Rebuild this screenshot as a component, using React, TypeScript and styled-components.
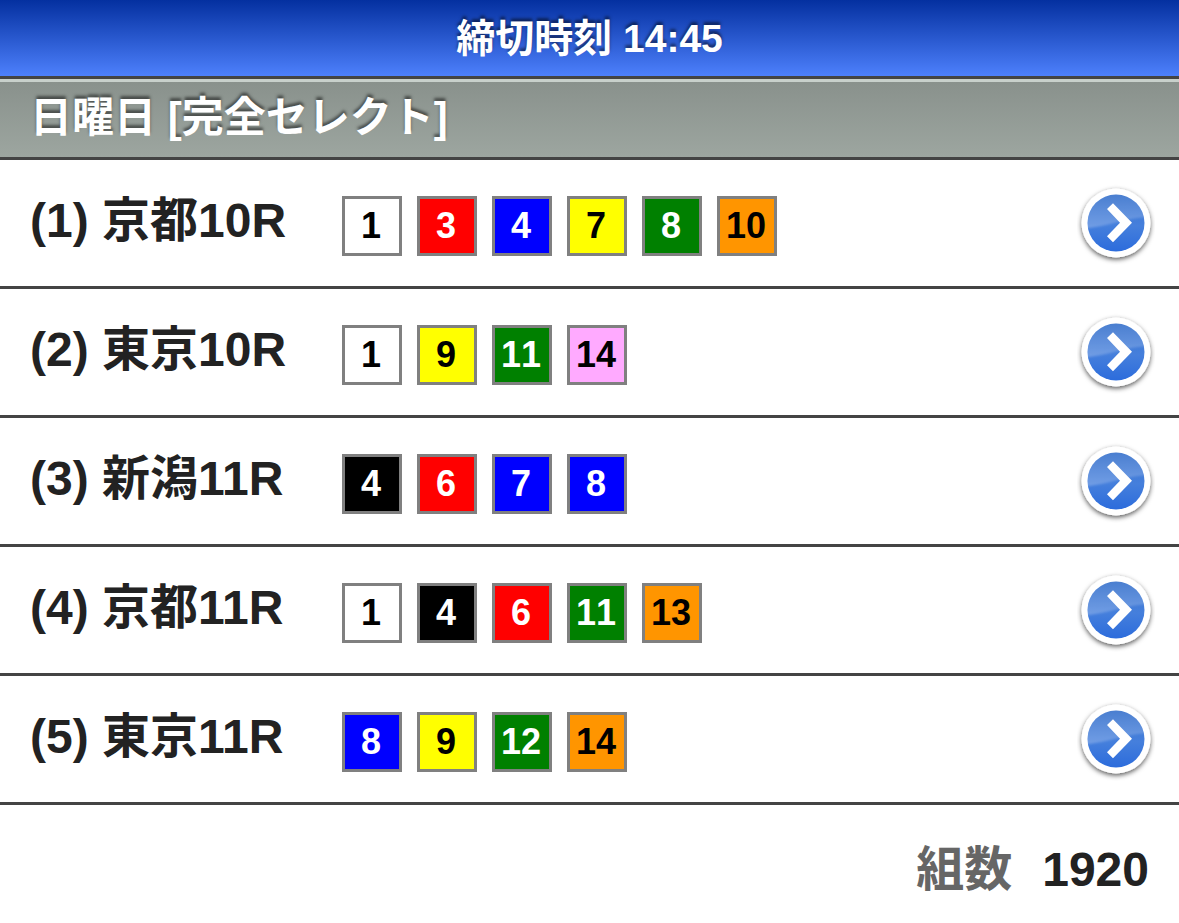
import React from "react";
import styled, { createGlobalStyle } from "styled-components";

const GlobalStyle = createGlobalStyle`
  *, *::before, *::after { box-sizing: border-box; }
  body {
    margin: 0;
    background: #fff;
    color: #222;
    font-family: "Liberation Sans", "Noto Sans CJK JP", sans-serif;
    font-weight: 700;
  }
`;

const LINE = "3px solid #444";

const TopBar = styled.header`
  display: flex;
  align-items: center;
  justify-content: center;
  height: 79px;
  padding-top: 2px;
  border-bottom: ${LINE};
  background: linear-gradient(#0430a0, #4d80fc);
`;

const Title = styled.h1`
  margin: 0;
  font-size: 39px;
  line-height: 56px;
  color: #fff;
  text-shadow: 0 -3px 3px rgba(0, 0, 0, 0.5);
`;

const SectionHeading = styled.h2`
  margin: 0;
  height: 81px;
  padding: 4px 30px 0;
  border-top: 3px solid #c8d0cb;
  border-bottom: ${LINE};
  background: linear-gradient(#89918c, #9da6a0);
  font-size: 42px;
  line-height: 64px;
  color: #fff;
  text-shadow: 0 -3px 3px rgba(0, 0, 0, 0.5);
`;

const RaceList = styled.ul`
  margin: 0;
  padding: 0;
  list-style: none;
`;

const RaceRow = styled.li`
  display: flex;
  align-items: center;
  height: 129px;
  padding: 0 24px 0 30px;
  border-bottom: ${LINE};
`;

const RaceName = styled.span`
  flex: 0 0 312px;
  padding-bottom: 4px;
  font-size: 48px;
  line-height: 72px;
  white-space: nowrap;
`;

const Picks = styled.div`
  display: flex;
  flex: 1;
  gap: 15px;
  padding-top: 6px;
`;

type BadgeColor = "white" | "black" | "red" | "blue" | "yellow" | "green" | "orange" | "pink";

const badgeColors: Record<BadgeColor, [string, string]> = {
  white: ["#fff", "#000"],
  black: ["#000", "#fff"],
  red: ["#f00", "#fff"],
  blue: ["#00f", "#fff"],
  yellow: ["#ff0", "#000"],
  green: ["#008000", "#fff"],
  orange: ["#ff9500", "#000"],
  pink: ["#ffaaff", "#000"],
};

const Badge = styled.span<{ $color: BadgeColor }>`
  width: 60px;
  height: 60px;
  padding-right: 2px;
  border: 3px solid #808080;
  background: ${({ $color }) => badgeColors[$color][0]};
  color: ${({ $color }) => badgeColors[$color][1]};
  font-size: 36px;
  font-kerning: none;
  line-height: 54px;
  text-align: center;
`;

const DetailButton = styled.button`
  display: block;
  width: 78px;
  height: 84px;
  padding: 0;
  border: 0;
  background: none;
  cursor: pointer;

  svg { display: block; }
`;

const Total = styled.dl`
  display: flex;
  justify-content: flex-end;
  gap: 30px;
  margin: 0;
  padding: 29px 30px 17px;
  font-size: 48px;
  line-height: 72px;
`;

const TotalLabel = styled.dt`
  color: #666;
`;

const TotalValue = styled.dd`
  margin: 0;
`;

type Pick = [number, BadgeColor];

const races: { name: string; picks: Pick[] }[] = [
  { name: "京都10R", picks: [[1, "white"], [3, "red"], [4, "blue"], [7, "yellow"], [8, "green"], [10, "orange"]] },
  { name: "東京10R", picks: [[1, "white"], [9, "yellow"], [11, "green"], [14, "pink"]] },
  { name: "新潟11R", picks: [[4, "black"], [6, "red"], [7, "blue"], [8, "blue"]] },
  { name: "京都11R", picks: [[1, "white"], [4, "black"], [6, "red"], [11, "green"], [13, "orange"]] },
  { name: "東京11R", picks: [[8, "blue"], [9, "yellow"], [12, "green"], [14, "orange"]] },
];

function IconDefs() {
  return (
    <svg width="0" height="0" style={{ display: "block" }} aria-hidden="true">
      <defs>
        <linearGradient id="disc" x1="0" y1="0" x2="0" y2="1">
          <stop offset="0" stopColor="#3b74cc" />
          <stop offset="0.55" stopColor="#457fdc" />
          <stop offset="1" stopColor="#2c6cdc" />
        </linearGradient>
        <linearGradient id="gloss" x1="0" y1="0" x2="0" y2="1">
          <stop offset="0" stopColor="#fff" stopOpacity="0.05" />
          <stop offset="1" stopColor="#fff" stopOpacity="0.24" />
        </linearGradient>
        <filter id="discShadow" x="-20%" y="-20%" width="140%" height="140%">
          <feDropShadow dx="0" dy="2" stdDeviation="2.5" floodColor="#000" floodOpacity="0.65" />
        </filter>
        <filter id="glossBlur">
          <feGaussianBlur stdDeviation="1" />
        </filter>
        <clipPath id="discClip">
          <circle cx="39" cy="42" r="28.5" />
        </clipPath>
      </defs>
    </svg>
  );
}

function ArrowIcon() {
  return (
    <svg width="78" height="84" viewBox="0 0 78 84" aria-hidden="true">
      <circle cx="39" cy="42" r="34.5" fill="#fff" filter="url(#discShadow)" />
      <circle cx="39" cy="42" r="28.5" fill="url(#disc)" />
      <g clipPath="url(#discClip)">
        <path d="M4 8H74V36C52 36 30 46 4 48Z" fill="url(#gloss)" filter="url(#glossBlur)" />
      </g>
      <path d="M36 22.2L55 41.8L36 61.2L30 55.2L43 41.8L30 28Z" fill="#fff" />
    </svg>
  );
}

export default function App() {
  return (
    <>
      <GlobalStyle />
      <IconDefs />
      <TopBar>
        <Title>締切時刻 14:45</Title>
      </TopBar>
      <main>
        <SectionHeading>日曜日 [完全セレクト]</SectionHeading>
        <RaceList>
          {races.map(({ name, picks }, i) => (
            <RaceRow key={name}>
              <RaceName>{`(${i + 1}) ${name}`}</RaceName>
              <Picks>
                {picks.map(([n, color]) => (
                  <Badge key={n} $color={color}>{n}</Badge>
                ))}
              </Picks>
              <DetailButton type="button" aria-label={name}>
                <ArrowIcon />
              </DetailButton>
            </RaceRow>
          ))}
        </RaceList>
        <Total>
          <TotalLabel>組数</TotalLabel>
          <TotalValue>1920</TotalValue>
        </Total>
      </main>
    </>
  );
}
